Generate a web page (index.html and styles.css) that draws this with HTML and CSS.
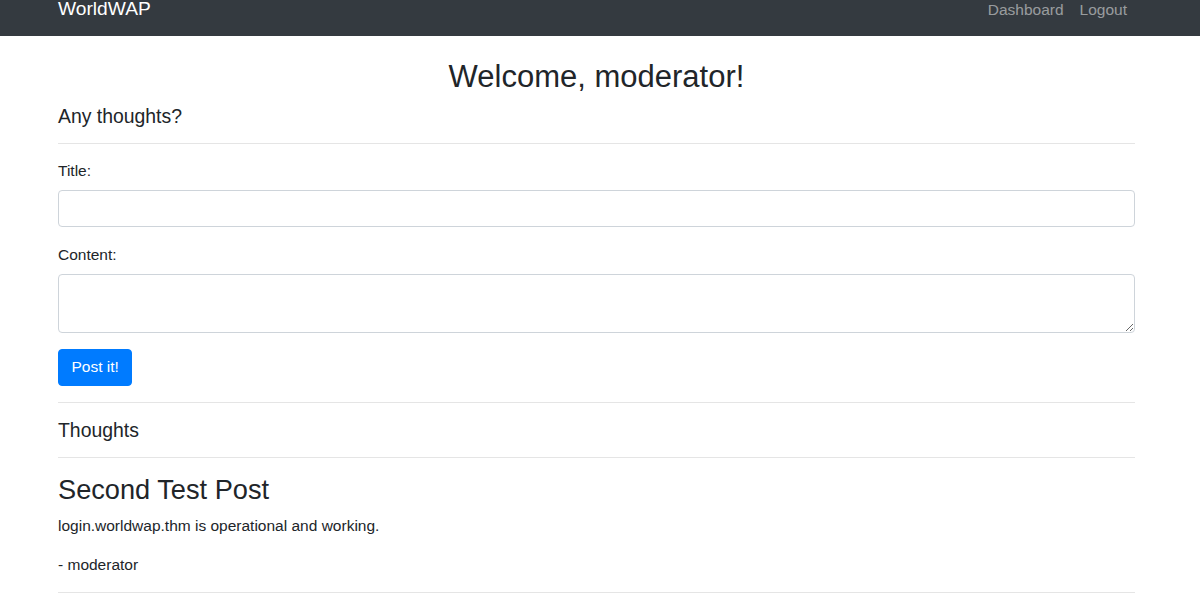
FILE: index.html
```html
<!DOCTYPE html>
<html lang="en">
<head>
<meta charset="utf-8">
<title>WorldWAP</title>
<link rel="stylesheet" href="styles.css">
</head>
<body>
<nav class="navbar">
  <div class="container nav-inner">
    <a class="brand" href="#">WorldWAP</a>
    <ul class="nav-links">
      <li><a href="#">Dashboard</a></li>
      <li><a href="#">Logout</a></li>
    </ul>
  </div>
</nav>
<main class="container main">
  <h2 class="welcome">Welcome, moderator!</h2>
  <h5 class="section-title">Any thoughts?</h5>
  <hr class="rule rule-a">
  <form class="post-form">
    <label class="label" for="title">Title:</label>
    <input class="field" id="title" type="text">
    <label class="label label-content" for="content">Content:</label>
    <textarea class="field area" id="content"></textarea>
    <button class="btn" type="button">Post it!</button>
  </form>
  <hr class="rule rule-b">
  <h5 class="section-title thoughts">Thoughts</h5>
  <hr class="rule rule-c">
  <article class="post">
    <h3 class="post-title">Second Test Post</h3>
    <p class="post-body">login.worldwap.thm is operational and working.</p>
    <p class="post-author">- moderator</p>
  </article>
  <hr class="rule rule-d">
</main>
</body>
</html>
```
FILE: styles.css
```css
* { box-sizing: border-box; }
html, body { margin: 0; padding: 0; }
body {
  font-family: "Liberation Sans", Arial, sans-serif;
  font-size: 15.5px;
  line-height: 22px;
  color: #212529;
  background: #fff;
}
.container {
  width: 1077px;
  margin-left: 58px;
}
.navbar {
  background: #343a40;
  height: 36px;
}
.nav-inner {
  display: flex;
  justify-content: space-between;
  align-items: flex-start;
}
.brand {
  font-size: 19.2px;
  line-height: 20px;
  color: #fff;
  text-decoration: none;
  margin-top: -1px;
}
.nav-links {
  list-style: none;
  margin: 0;
  padding: 0;
  display: flex;
}
.nav-links a {
  display: block;
  padding: 0 8px;
  font-size: 15.5px;
  line-height: 20px;
  color: rgba(255,255,255,.5);
  text-decoration: none;
}
.main { padding-top: 23px; }
.welcome {
  margin: 0;
  font-size: 31px;
  line-height: 36px;
  font-weight: 400;
  text-align: center;
}
.section-title {
  margin: 10px 0 0;
  font-size: 19.4px;
  line-height: 22px;
  font-weight: 400;
}
.rule {
  border: 0;
  border-top: 1px solid rgba(0,0,0,.1);
  margin: 0;
}
.rule-a { margin-top: 15.6px; }
.post-form { display: flex; flex-direction: column; align-items: flex-start; }
.label { display: block; margin-top: 16.6px; }
.label-content { margin-top: 17.6px; }
.field {
  display: block;
  width: 100%;
  height: 37px;
  margin-top: 7.4px;
  border: 1px solid #ced4da;
  border-radius: 4px;
  font: inherit;
  padding: 6px 12px;
  background: #fff;
}
.area { height: 59px; resize: vertical; }
.btn {
  margin-top: 16px;
  height: 37px;
  padding: 0 12.5px;
  background: #007bff;
  border: 1px solid #007bff;
  border-radius: 4px;
  color: #fff;
  font: inherit;
  line-height: 22px;
}
.rule-b { margin-top: 16px; }
.thoughts { margin-top: 16px; }
.rule-c { margin-top: 16px; }
.post-title {
  margin: 16px 0 0;
  font-size: 27.2px;
  line-height: 32px;
  font-weight: 400;
}
.post-body { margin: 9.8px 0 0; }
.post-author { margin: 16.4px 0 0; }
.rule-d { margin-top: 16.6px; }
```
